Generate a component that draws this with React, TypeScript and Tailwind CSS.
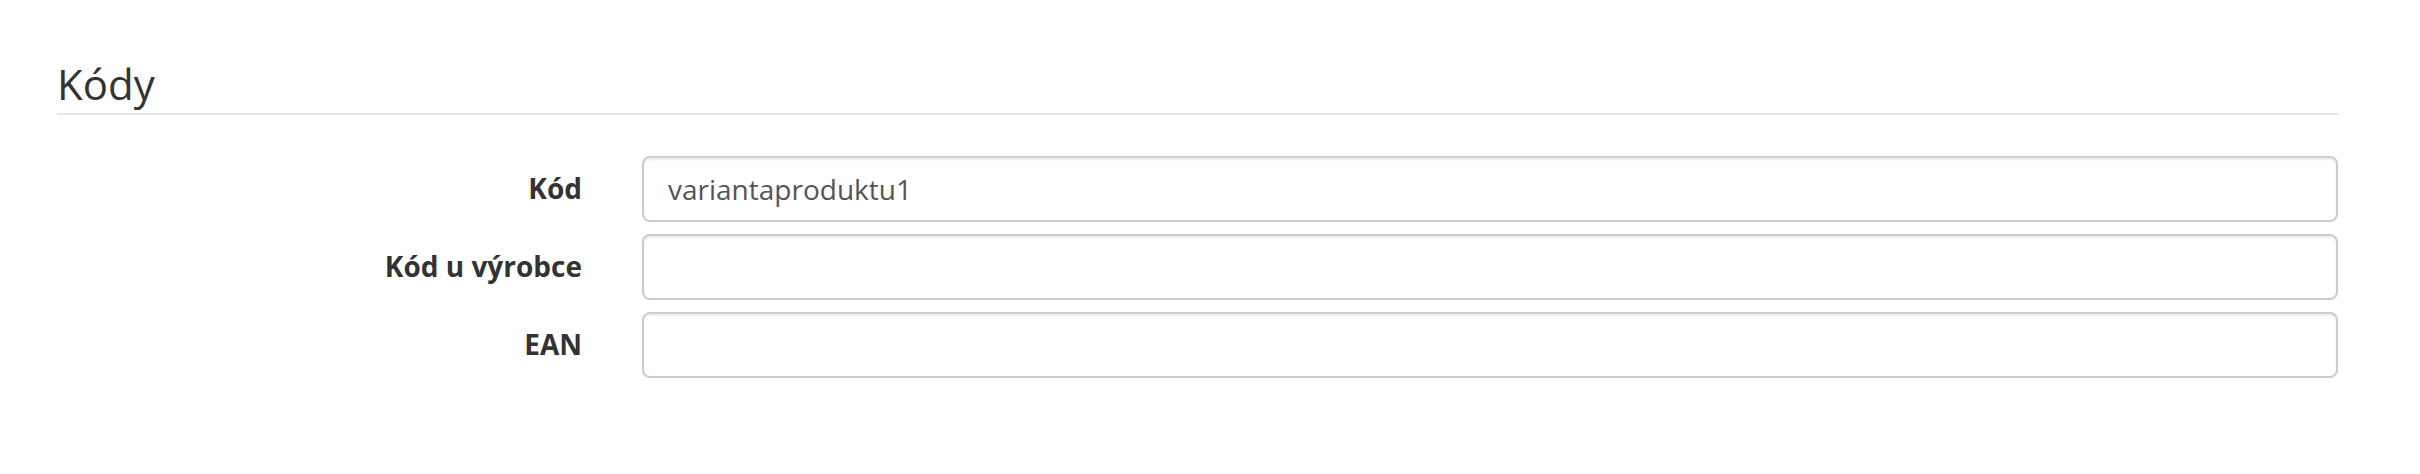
const fields = [
  { label: 'Kód', value: 'variantaproduktu1' },
  { label: 'Kód u výrobce', value: '' },
  { label: 'EAN', value: '' },
];

export default function App() {
  return (
    <div className="w-full h-[474px] bg-white pl-[57px] pr-[82px] font-['Open_Sans',sans-serif] text-[#333]">
      {/* Legend */}
      <div className="pt-[61px] pb-[6px] border-b-2 border-[#e5e5e5]">
        <h2 className="text-[42px] leading-[46px] font-normal">Kódy</h2>
      </div>

      {/* Form rows */}
      <div className="mt-[41px] flex flex-col gap-[12px]">
        {fields.map((f) => (
          <div key={f.label} className="flex items-center h-[66px]">
            <label className="w-[525px] shrink-0 pb-[3px] text-right text-[28px] font-bold">{f.label}</label>
            <input
              type="text"
              defaultValue={f.value}
              className="ml-[60px] flex-1 h-[66px] px-[24px] text-[28px] text-[#555] bg-white border-2 border-[#ccc] rounded-[8px] shadow-[inset_0_2px_2px_rgba(0,0,0,0.075)] outline-none"
            />
          </div>
        ))}
      </div>
    </div>
  );
}
